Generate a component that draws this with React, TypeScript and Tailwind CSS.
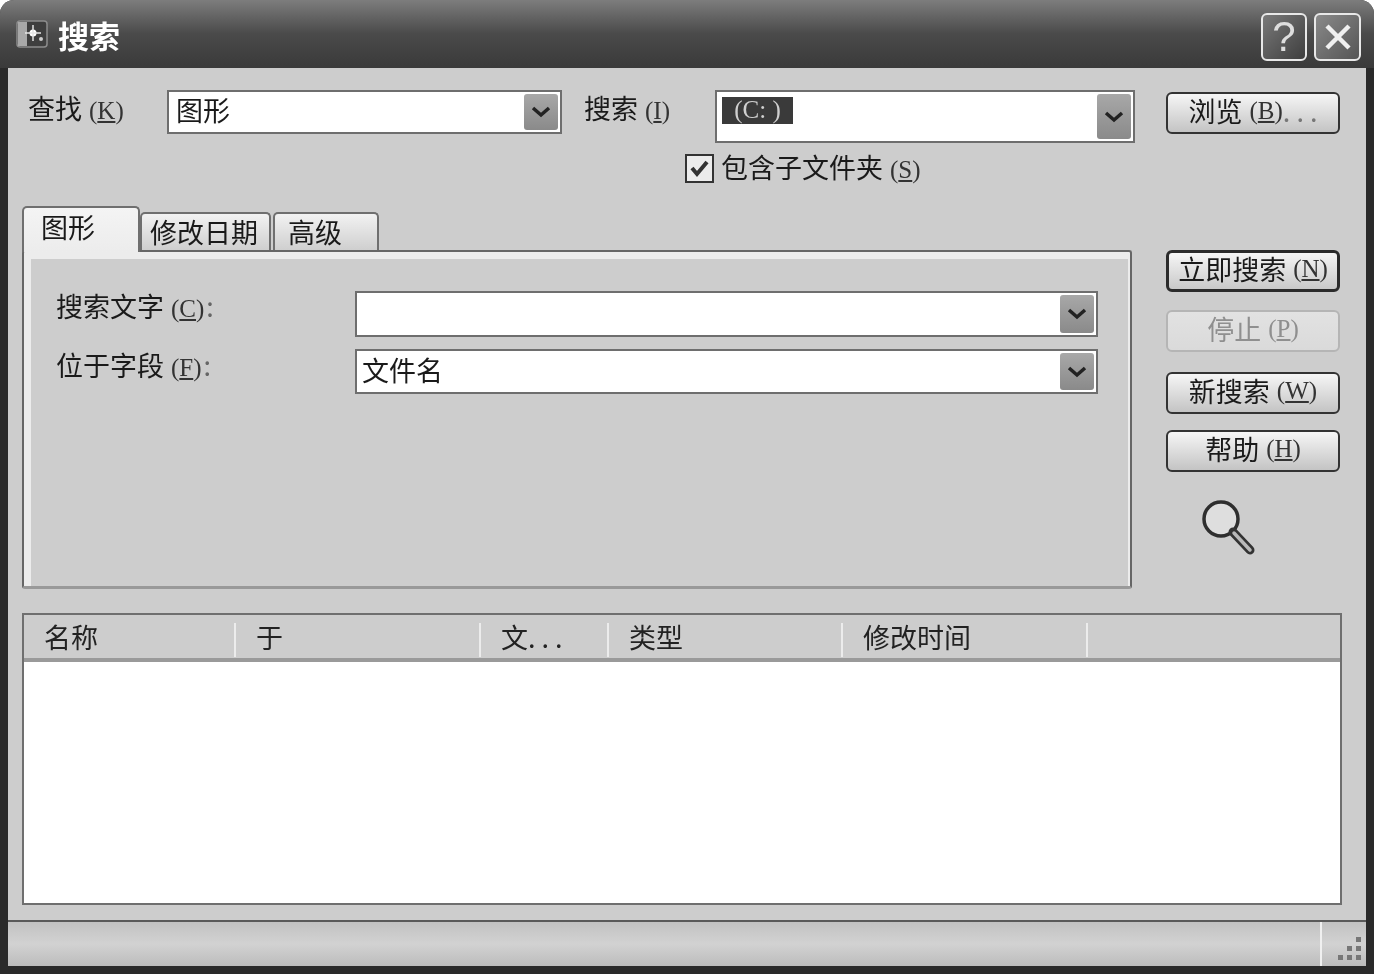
import { useState } from 'react';

function Key({ k, gray }: { k: string; gray?: boolean }) {
  return (
    <span
      className={`ml-[7px] text-[25px] ${gray ? 'text-[#8f8f8f]' : 'text-[#333]'}`}
      style={{ fontFamily: '"Liberation Serif", serif' }}
    >
      (<span className="underline underline-offset-2">{k}</span>)
    </span>
  );
}

function Chevron() {
  return (
    <svg width="22" height="14" viewBox="0 0 22 14">
      <path d="M3 3 L11 10 L19 3" fill="none" stroke="#222" strokeWidth="3.5" />
    </svg>
  );
}

function Combo({ className, children }: { className: string; children?: React.ReactNode }) {
  return (
    <div className={`flex justify-between border-2 border-[#6e6e6e] bg-white p-[2px] ${className}`}>
      <div className="min-w-0 flex-1">{children}</div>
      <div className="flex w-[34px] items-center justify-center rounded-[3px] bg-gradient-to-b from-[#a8a8a8] to-[#8a8a8a]">
        <Chevron />
      </div>
    </div>
  );
}

function Button({
  children,
  kind = 'normal',
  className = '',
}: {
  children: React.ReactNode;
  kind?: 'normal' | 'default' | 'disabled';
  className?: string;
}) {
  const tone =
    kind === 'disabled'
      ? 'border-2 border-[#b5b5b5] text-[#8f8f8f] from-[#e2e2e2] to-[#dadada]'
      : kind === 'default'
        ? 'border-[3px] border-[#2b2b2b] text-[#1a1a1a] from-[#f6f6f6] to-[#c9c9c9]'
        : 'border-2 border-[#333] text-[#1a1a1a] from-[#f6f6f6] to-[#c4c4c4]';
  return (
    <div
      className={`flex h-[42px] w-[174px] items-center justify-center rounded-[6px] bg-gradient-to-b pb-[5px] text-[27px] leading-none ${tone} ${className}`}
    >
      {children}
    </div>
  );
}

function Tab({ children, className }: { children: React.ReactNode; className: string }) {
  return (
    <div
      className={`rounded-t-[5px] border-2 border-b-0 border-[#6f6f6f] bg-gradient-to-b text-[27px] leading-none text-[#1a1a1a] ${className}`}
    >
      {children}
    </div>
  );
}

const columns = [
  { label: '名称', w: 'w-[212px]' },
  { label: '于', w: 'w-[245px]' },
  { label: '文. . .', w: 'w-[128px]' },
  { label: '类型', w: 'w-[234px]' },
  { label: '修改时间', w: 'w-[245px]' },
];

export default function App() {
  const [checked] = useState(true);

  return (
    <div className="bg-white">
      <div
        className="flex h-[974px] w-[1374px] flex-col overflow-hidden rounded-t-[14px] bg-[#2a2a2a] text-[#1a1a1a] blur-[0.5px]"
        style={{ fontFamily: '"Noto Sans CJK SC", "Liberation Sans", sans-serif' }}
      >
        {/* title bar */}
        <div className="flex h-[68px] shrink-0 items-center justify-between bg-gradient-to-b from-[#7d7d7d] via-[#4a4a4a] to-[#3a3a3a] pl-[16px] pr-[13px]">
          <div className="flex items-center">
            <svg width="32" height="30" viewBox="0 0 32 30">
              <rect x="1" y="2" width="30" height="26" rx="3" fill="#3e3e3e" stroke="#8c8c8c" strokeWidth="1.5" />
              <rect x="2" y="3" width="9" height="24" fill="#a8a8a8" />
              <circle cx="17" cy="14" r="3.5" fill="#fff" />
              <path d="M17 6v16M9 14h16" stroke="#e5e5e5" strokeWidth="1.5" />
              <circle cx="25" cy="20" r="2" fill="#ccc" />
            </svg>
            <span className="ml-[10px] text-[31px] font-bold leading-none text-white">搜索</span>
          </div>
          <div className="flex gap-[7px] pt-[6px]">
            <div
              className="flex h-[48px] w-[46px] items-center justify-center rounded-[6px] border-2 border-[#e8e8e8] bg-gradient-to-br from-[#7a7a7a] to-[#3f3f3f] text-[42px] leading-none text-[#dedede]"
              style={{ fontFamily: '"Liberation Sans", sans-serif' }}
            >
              ?
            </div>
            <div className="flex h-[48px] w-[47px] items-center justify-center rounded-[6px] border-2 border-[#e8e8e8] bg-gradient-to-br from-[#8a8a8a] to-[#555]">
              <svg width="30" height="30" viewBox="0 0 30 30">
                <path d="M4 4 L26 26 M26 4 L4 26" stroke="#f0f0f0" strokeWidth="4.5" />
              </svg>
            </div>
          </div>
        </div>

        {/* body */}
        <div className="mx-[8px] flex min-h-0 flex-1 flex-col bg-[#cdcdcd] pl-[14px] pt-[22px]">
          <div className="flex">
            <div className="w-[1113px]">
              <div className="flex pl-[6px]">
                <div className="w-[139px] pt-[2px] text-[27px] leading-[32px]">
                  查找
                  <Key k="K" />
                </div>
                <Combo className="h-[44px] w-[395px]">
                  <div className="pl-[5px] text-[27px] leading-[32px]">图形</div>
                </Combo>
                <div className="ml-[22px] w-[131px] pt-[2px] text-[27px] leading-[32px]">
                  搜索
                  <Key k="I" />
                </div>
                <Combo className="h-[53px] w-[420px]">
                  <div
                    className="ml-[3px] mt-[3px] h-[27px] w-[71px] bg-[#3a3a3a] text-center text-[25px] leading-[26px] text-[#cfcfcf]"
                    style={{ fontFamily: '"Liberation Serif", serif' }}
                  >
                    (C: )
                  </div>
                </Combo>
              </div>

              <div className="mt-[11px] flex h-[29px] items-start pl-[663px]">
                <div className="flex h-[29px] w-[29px] items-center justify-center border-2 border-[#333] bg-[#ececec]">
                  {checked && (
                    <svg width="21" height="21" viewBox="0 0 21 21">
                      <path d="M3 10 L8 16 L18 4" fill="none" stroke="#333" strokeWidth="4" />
                    </svg>
                  )}
                </div>
                <span className="-mt-[2px] ml-[7px] whitespace-nowrap text-[27px] leading-[30px]">
                  包含子文件夹
                  <Key k="S" />
                </span>
              </div>

              <div className="mt-[24px] flex h-[43px] items-end">
                <Tab className="relative z-10 -mb-[2px] h-[46px] w-[118px] from-[#f4f4f4] to-[#ececec] pl-[17px] pt-[5px]">图形</Tab>
                <Tab className="h-[38px] w-[131px] from-[#f2f2f2] to-[#cfcfcf] pl-[8px] pt-[4px]">修改日期</Tab>
                <Tab className="ml-[2px] h-[38px] w-[106px] from-[#f2f2f2] to-[#cfcfcf] pl-[13px] pt-[4px]">高级</Tab>
              </div>

              {/* tab panel */}
              <div className="h-[339px] w-[1110px] rounded-[3px] border-2 border-b-[3px] border-[#666] border-b-[#999] bg-[#ececec] pl-[7px] pr-[2px] pt-[7px]">
                <div className="h-full bg-[#cdcdcd] pl-[25px] pt-[32px]">
                  <div className="flex">
                    <div className="w-[299px] text-[27px] leading-[30px]">
                      搜索文字
                      <Key k="C" />
                      <span className="ml-[2px] text-[#666]">:</span>
                    </div>
                    <Combo className="h-[46px] w-[743px]" />
                  </div>
                  <div className="mt-[12px] flex">
                    <div className="w-[299px] pt-[1px] text-[27px] leading-[30px]">
                      位于字段
                      <Key k="F" />
                      <span className="ml-[2px] text-[#666]">:</span>
                    </div>
                    <Combo className="h-[45px] w-[743px]">
                      <div className="pl-[3px] pt-[1px] text-[27px] leading-[32px]">文件名</div>
                    </Combo>
                  </div>
                </div>
              </div>
            </div>

            {/* right buttons */}
            <div className="ml-[31px] w-[174px] pt-[2px]">
              <Button>
                浏览
                <Key k="B" />
                <span className="text-[#777]">. . .</span>
              </Button>
              <Button kind="default" className="mt-[116px]">
                立即搜索
                <Key k="N" />
              </Button>
              <Button kind="disabled" className="mt-[18px]">
                停止
                <Key k="P" gray />
              </Button>
              <Button className="mt-[20px]">
                新搜索
                <Key k="W" />
              </Button>
              <Button className="mt-[16px]">
                帮助
                <Key k="H" />
              </Button>
              <svg className="ml-[34px] mt-[26px]" width="58" height="60" viewBox="0 0 58 60">
                <circle cx="21" cy="21" r="17" fill="#dedede" stroke="#2e2e2e" strokeWidth="3.5" />
                <path d="M33 34 L50 52" stroke="#333" strokeWidth="9" strokeLinecap="round" />
                <path d="M34 35 L50 52" stroke="#b9b9b9" strokeWidth="3.5" strokeLinecap="round" />
              </svg>
            </div>
          </div>

          {/* results list */}
          <div className="mt-[24px] h-[292px] w-[1320px] border-2 border-[#6f6f6f] bg-white">
            <div className="flex h-[47px] border-b-[4px] border-[#9a9a9a] bg-[#cdcdcd]">
              {columns.map((c) => (
                <div key={c.label} className={`${c.w} flex justify-between pl-[20px] pt-[5px]`}>
                  <span className="text-[27px] leading-[34px] text-[#222]">{c.label}</span>
                  <div className="mt-[3px] h-[34px] w-[2px] bg-[#ececec]" />
                </div>
              ))}
            </div>
          </div>

          <div className="flex-1" />
        </div>

        {/* status bar */}
        <div className="mx-[8px] mb-[8px] flex h-[46px] shrink-0 justify-end border-t-2 border-[#5a5a5a] bg-gradient-to-b from-[#c2c2c2] via-[#d2d2d2] to-[#bcbcbc]">
          <div className="flex w-[46px] items-end justify-end border-l-2 border-[#f0f0f0] pb-[3px] pr-[2px]">
            <svg width="28" height="28" viewBox="0 0 28 28" fill="#777">
              <rect x="20" y="2" width="5" height="5" />
              <rect x="20" y="11" width="5" height="5" />
              <rect x="11" y="11" width="5" height="5" />
              <rect x="20" y="20" width="5" height="5" />
              <rect x="11" y="20" width="5" height="5" />
              <rect x="2" y="20" width="5" height="5" />
            </svg>
          </div>
        </div>
      </div>
    </div>
  );
}
